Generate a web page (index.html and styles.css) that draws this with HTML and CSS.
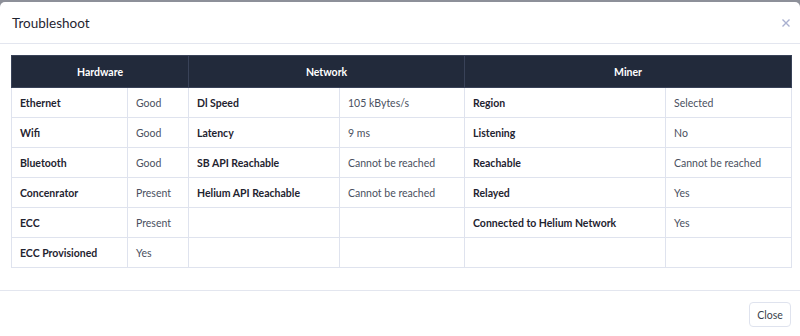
FILE: index.html
```html
<!DOCTYPE html>
<html>
    <head>
        <title>Troubleshoot</title>
        <meta charset="utf-8">
        <link rel="stylesheet" href="styles.css">
    </head>
    <body>
        <div class="modal">
            <div class="modal-header">
                <h5 class="modal-title">Troubleshoot</h5>
                <button class="btn-x" aria-label="Close">
                    <svg width="8" height="8" viewBox="0 0 8 8">
                        <path d="M0.5 0.5 L7.5 7.5 M7.5 0.5 L0.5 7.5" stroke="#a9b0d0" stroke-width="1.4" fill="none"/>
                    </svg>
                </button>
            </div>
            <div class="modal-body">
                <table class="trouble">
                    <colgroup>
                        <col style="width:116px">
                        <col style="width:61px">
                        <col style="width:151px">
                        <col style="width:125px">
                        <col style="width:201px">
                        <col style="width:126px">
                    </colgroup>
                    <thead>
                        <tr>
                            <th colspan="2">Hardware</th>
                            <th colspan="2">Network</th>
                            <th colspan="2">Miner</th>
                        </tr>
                    </thead>
                    <tbody>
                        <tr>
                            <td class="label">Ethernet</td><td>Good</td>
                            <td class="label">Dl Speed</td><td>105 kBytes/s</td>
                            <td class="label">Region</td><td>Selected</td>
                        </tr>
                        <tr>
                            <td class="label">Wifi</td><td>Good</td>
                            <td class="label">Latency</td><td>9 ms</td>
                            <td class="label">Listening</td><td>No</td>
                        </tr>
                        <tr>
                            <td class="label">Bluetooth</td><td>Good</td>
                            <td class="label">SB API Reachable</td><td>Cannot be reached</td>
                            <td class="label">Reachable</td><td>Cannot be reached</td>
                        </tr>
                        <tr>
                            <td class="label">Concenrator</td><td>Present</td>
                            <td class="label">Helium API Reachable</td><td>Cannot be reached</td>
                            <td class="label">Relayed</td><td>Yes</td>
                        </tr>
                        <tr>
                            <td class="label">ECC</td><td>Present</td>
                            <td></td><td></td>
                            <td class="label">Connected to Helium Network</td><td>Yes</td>
                        </tr>
                        <tr>
                            <td class="label">ECC Provisioned</td><td>Yes</td>
                            <td></td><td></td>
                            <td></td><td></td>
                        </tr>
                    </tbody>
                </table>
            </div>
            <div class="modal-footer">
                <button class="btn-close">Close</button>
            </div>
        </div>
    </body>
</html>
```

FILE: styles.css
```css
body {
    margin: 0;
    background: #8d9099;
    font-family: "Lato", "Noto Sans", sans-serif;
}

.modal {
    margin-top: 2px;
    height: 334px;
    background: #ffffff;
    border-radius: 5px 5px 0 0;
}

.modal-header {
    height: 41px;
    padding: 0 10px 0 12px;
    display: flex;
    align-items: center;
    justify-content: space-between;
    border-bottom: 1px solid #e3e6ef;
}

.modal-title {
    margin: 0;
    font-size: 13.5px;
    font-weight: 400;
    color: #1f2430;
}

.btn-x {
    border: none;
    background: none;
    padding: 0;
    display: flex;
}

.modal-body {
    padding: 11px 11px 22px 11px;
}

.trouble {
    width: 780px;
    table-layout: fixed;
    border-collapse: collapse;
    font-size: 10.5px;
}

.trouble th {
    height: 31px;
    padding: 0;
    background: #222a3b;
    color: #ffffff;
    font-weight: 700;
    text-align: center;
    border: 1px solid #394258;
}

.trouble td {
    height: 29px;
    padding: 0 8px;
    border: 1px solid #dfe3ee;
    color: #4a5060;
    white-space: nowrap;
}

.trouble td.label {
    font-weight: 700;
    color: #1f2430;
}

.modal-footer {
    border-top: 1px solid #e3e6ef;
    padding: 11px 9px;
    display: flex;
    justify-content: flex-end;
}

.btn-close {
    width: 42px;
    height: 25px;
    padding: 0;
    background: #ffffff;
    border: 1px solid #dfe3ee;
    border-radius: 4px;
    font-family: "Lato", "Noto Sans", sans-serif;
    font-size: 10.5px;
    color: #3a3f4b;
}
```
